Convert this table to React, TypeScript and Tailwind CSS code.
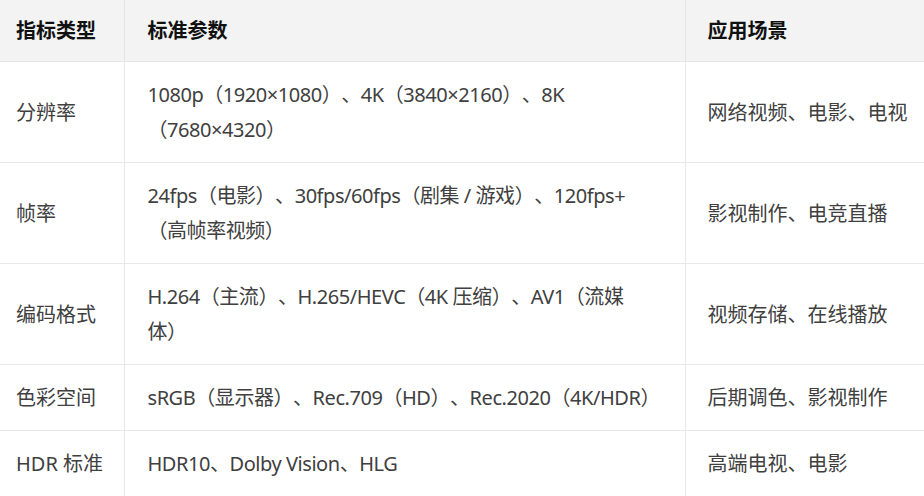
import React from 'react';

type Row = {
  kind: string;
  params: React.ReactNode;
  usage: string;
};

const ROWS: Row[] = [
  {
    kind: '分辨率',
    params: (
      <>
        1080p（1920×1080）、4K（3840×2160）、8K
        <br />
        （7680×4320）
      </>
    ),
    usage: '网络视频、电影、电视',
  },
  {
    kind: '帧率',
    params: (
      <>
        24fps（电影）、30fps/60fps（剧集 / 游戏）、120fps+
        <br />
        （高帧率视频）
      </>
    ),
    usage: '影视制作、电竞直播',
  },
  {
    kind: '编码格式',
    params: (
      <>
        H.264（主流）、H.265/HEVC（4K 压缩）、AV1（流媒
        <br />
        体）
      </>
    ),
    usage: '视频存储、在线播放',
  },
  {
    kind: '色彩空间',
    params: 'sRGB（显示器）、Rec.709（HD）、Rec.2020（4K/HDR）',
    usage: '后期调色、影视制作',
  },
  {
    kind: 'HDR 标准',
    params: 'HDR10、Dolby Vision、HLG',
    usage: '高端电视、电影',
  },
];

const App: React.FC = () => {
  return (
    <div className="w-[924px] h-[496px] overflow-hidden bg-white font-['Noto_Sans','Noto_Sans_CJK_SC',sans-serif] text-[20px] leading-[35px] text-[#404040] [text-spacing-trim:space-all]">
      <table className="w-[924px] border-collapse table-fixed">
        <colgroup>
          <col className="w-[124px]" />
          <col className="w-[561px]" />
          <col className="w-[239px]" />
        </colgroup>
        <thead>
          {/* Header */}
          <tr className="bg-[#f3f3f3] text-[#111] font-bold">
            <th className="text-left align-middle pl-4 pr-2 py-[13px] border-b border-r border-[#e5e5e5]">指标类型</th>
            <th className="text-left align-middle pl-[23px] pr-4 py-[13px] border-b border-r border-[#e5e5e5]">标准参数</th>
            <th className="text-left align-middle pl-[22px] pr-4 py-[13px] border-b border-[#e5e5e5]">应用场景</th>
          </tr>
        </thead>
        <tbody>
          {ROWS.map(row => (
            <tr key={row.kind}>
              <td className="align-middle pl-4 pr-2 py-[15px] border-b border-r border-[#e8e8e8] whitespace-nowrap">{row.kind}</td>
              <td className="align-middle pl-[23px] pr-4 py-[15px] border-b border-r border-[#e8e8e8] whitespace-nowrap tracking-[-0.45px]">{row.params}</td>
              <td className="align-middle pl-[22px] pr-4 py-[15px] border-b border-[#e8e8e8] whitespace-nowrap">{row.usage}</td>
            </tr>
          ))}
        </tbody>
      </table>
    </div>
  );
};

export default App;
